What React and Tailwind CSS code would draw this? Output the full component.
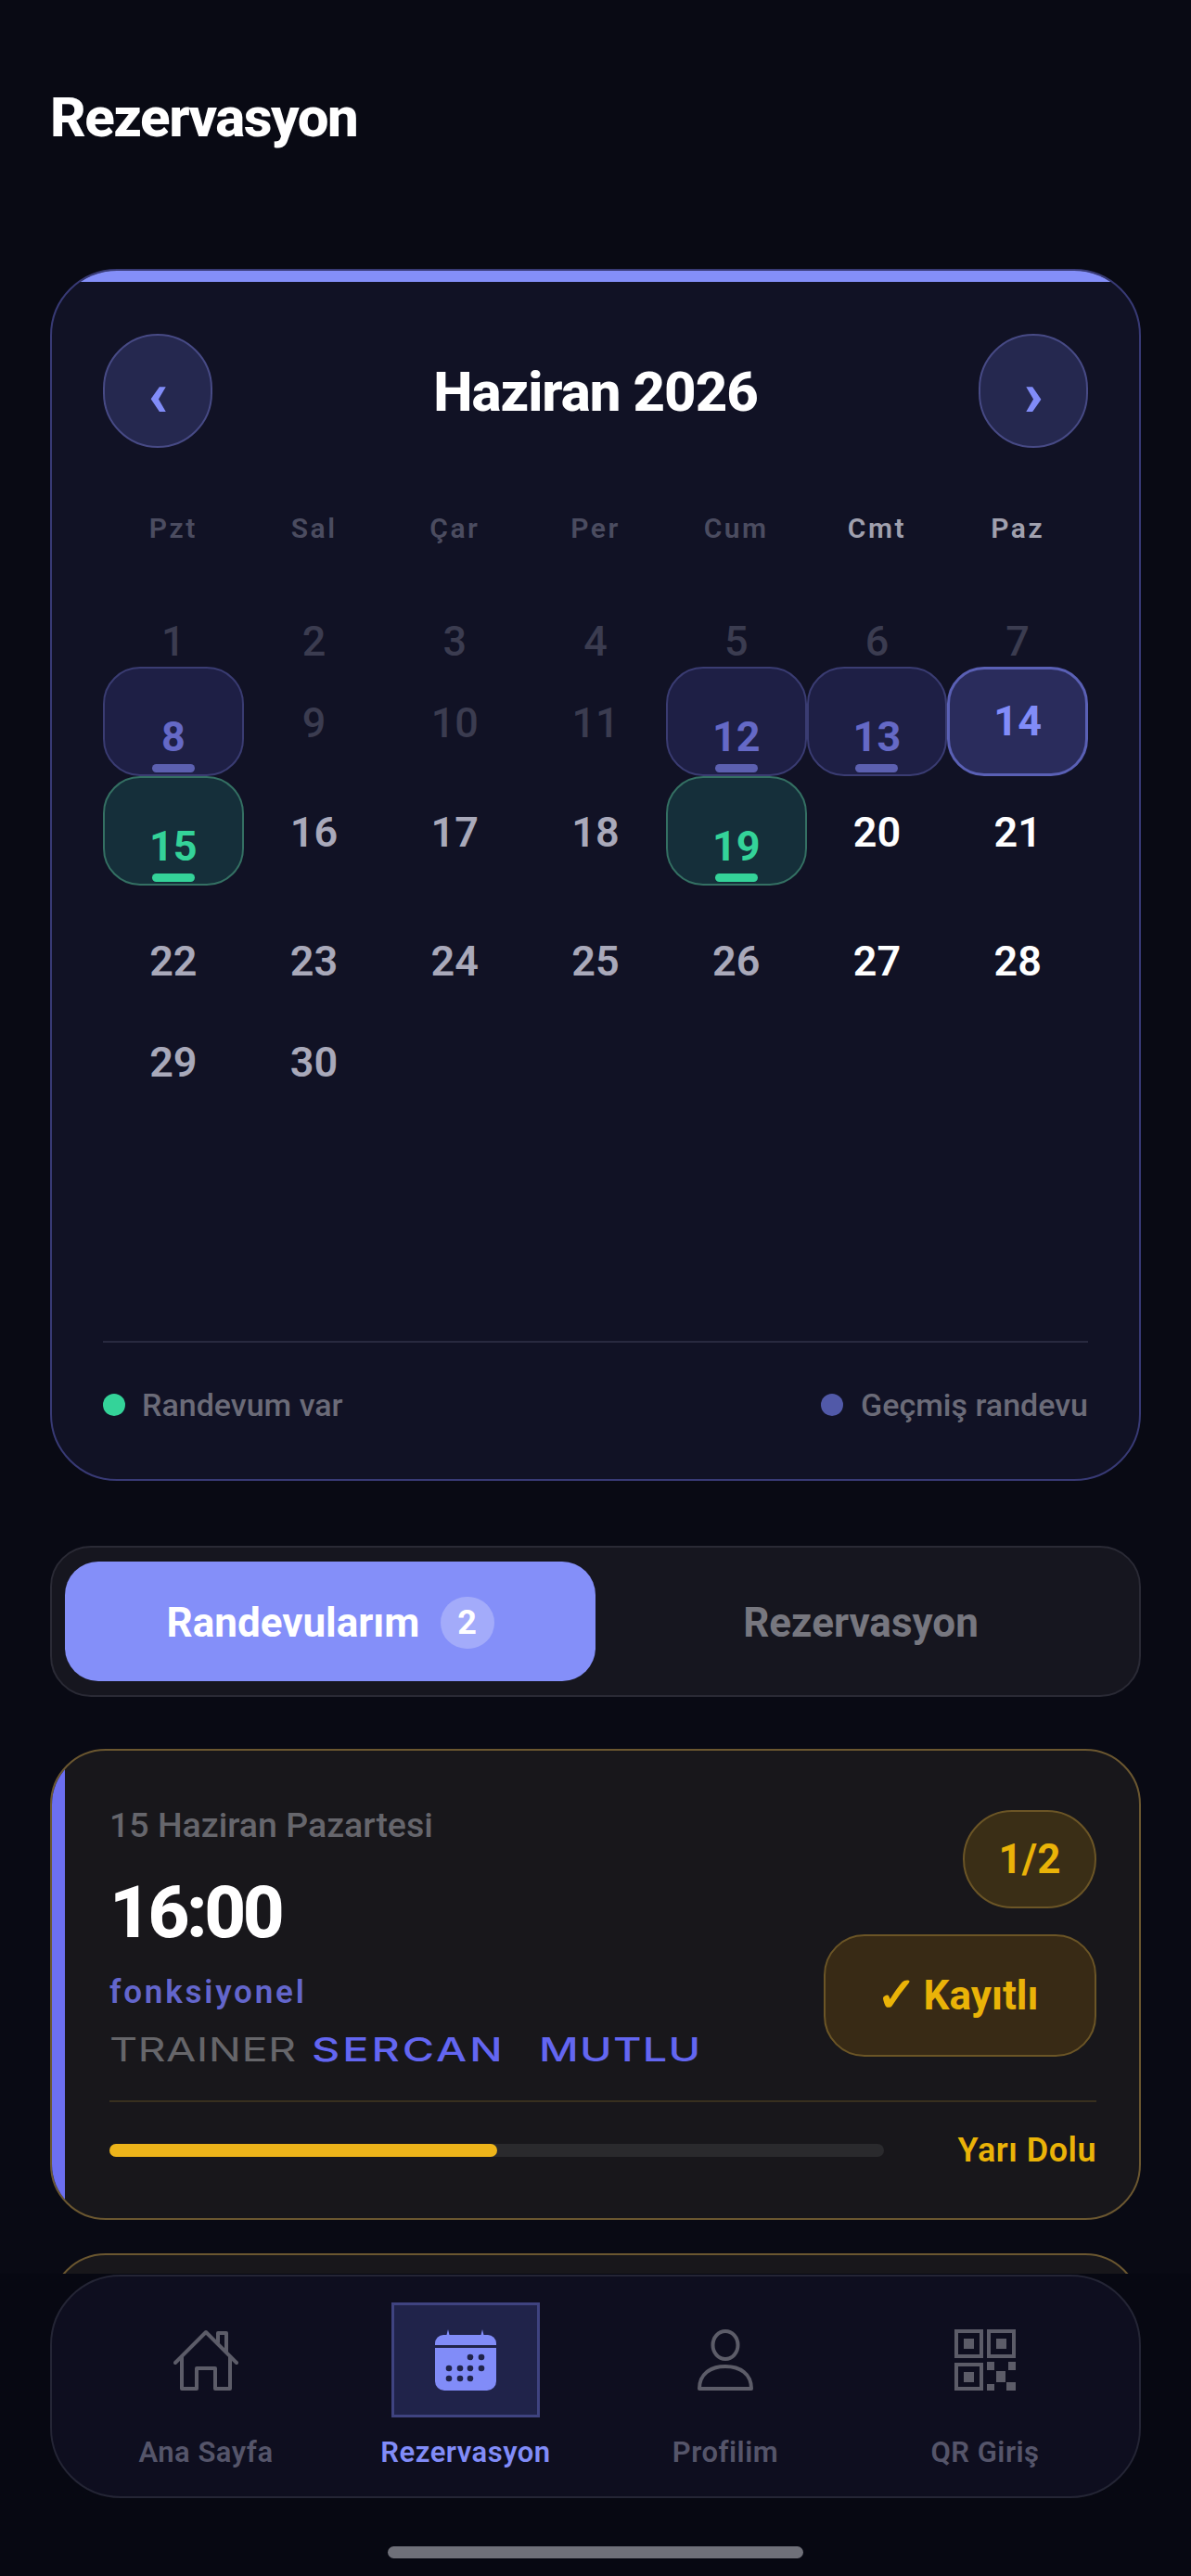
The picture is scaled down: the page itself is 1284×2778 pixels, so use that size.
import React from 'react';

const weekdays = [
    { label: 'Pzt' }, { label: 'Sal' }, { label: 'Çar' }, { label: 'Per' },
    { label: 'Cum' }, { label: 'Cmt', weekend: true }, { label: 'Paz', weekend: true },
];

// kinds: off (before today), past, today, booked, open, weekend
const days = [
    [1, 'off'], [2, 'off'], [3, 'off'], [4, 'off'], [5, 'off'], [6, 'off'], [7, 'off'],
    [8, 'past'], [9, 'off'], [10, 'off'], [11, 'off'], [12, 'past'], [13, 'past'], [14, 'today'],
    [15, 'booked'], [16, 'open'], [17, 'open'], [18, 'open'], [19, 'booked'], [20, 'weekend'], [21, 'weekend'],
    [22, 'open'], [23, 'open'], [24, 'open'], [25, 'open'], [26, 'open'], [27, 'weekend'], [28, 'weekend'],
    [29, 'open'], [30, 'open'],
];

function DayCell({ day, kind }) {
    if (kind === 'past' || kind === 'booked') {
        const past = kind === 'past';
        return (
            <div className={`flex flex-col items-center justify-end rounded-[40px] border-2 pb-[2px] ${past ? 'bg-[#1e1f45] border-[#3a3c72]' : 'bg-[#152f3a] border-[#347063]'}`}>
                <span className={`text-[45px] leading-[48px] font-bold ${past ? 'text-[#6569c6]' : 'text-[#34d399]'}`}>{day}</span>
                <span className={`mt-[5px] h-[9px] w-[46px] rounded-full ${past ? 'bg-[#5c60b0]' : 'bg-[#34d399]'}`} />
            </div>
        );
    }
    if (kind === 'today') {
        return (
            <div className="flex items-center justify-center rounded-[40px] border-[3px] border-[#5a60b5] bg-[#2a2c5c] text-[45px] font-bold text-[#818cf8]">
                {day}
            </div>
        );
    }
    const color = { off: 'text-[#3b3c50] font-medium', open: 'text-[#a9a9ba] font-semibold', weekend: 'text-white font-semibold' }[kind];
    return <div className={`flex items-center justify-center pt-[3px] text-[45px] ${color}`}>{day}</div>;
}

function RoundButton({ children }) {
    return (
        <div className="flex h-[123px] w-[118px] items-center justify-center rounded-full border-2 border-[#474a85] bg-[#25284f] pt-[6px] text-[68px] leading-none font-black text-[#818cf8]">
            {children}
        </div>
    );
}

function HomeIcon() {
    return (
        <svg width="70" height="66" viewBox="0 0 70 66" fill="none" stroke="#5c5c68" strokeWidth="4" strokeLinecap="round" strokeLinejoin="round">
            <path d="M2 36 L35 3 L68 36" />
            <path d="M9 30 V64 H25 V42 H45 V64 H61 V30" />
            <path d="M48 14 V4 H57 V24" />
        </svg>
    );
}

function CalendarIcon() {
    const dots = [[38, 30], [50, 30], [15, 42], [27, 42], [38, 42], [50, 42], [15, 53], [27, 53], [38, 53]];
    return (
        <svg width="66" height="66" viewBox="0 0 66 66">
            <path d="M12 8 L14 0 L16 8 Z M49 8 L51 0 L53 8 Z" fill="#818cf8" />
            <path d="M0 17 V15 a9 9 0 0 1 9 -9 H57 a9 9 0 0 1 9 9 V17 Z" fill="#818cf8" />
            <path d="M0 20 H66 V56 a10 10 0 0 1 -10 10 H10 a10 10 0 0 1 -10 -10 Z" fill="#818cf8" />
            {dots.map(([x, y]) => <circle key={`${x}-${y}`} cx={x} cy={y} r="3.3" fill="#20234a" />)}
        </svg>
    );
}

function PersonIcon() {
    return (
        <svg width="62" height="66" viewBox="0 0 62 66" fill="none" stroke="#5c5c68" strokeWidth="4" strokeLinejoin="round">
            <ellipse cx="31" cy="17" rx="13.5" ry="15" />
            <path d="M3 64 C3 48 15 40 31 40 C47 40 59 48 59 64 Z" />
        </svg>
    );
}

function QrIcon() {
    return (
        <svg width="66" height="66" viewBox="0 0 66 66" fill="#5c5c68">
            <g fill="none" stroke="#5c5c68" strokeWidth="4">
                <rect x="2" y="2" width="27" height="27" />
                <rect x="37" y="2" width="27" height="27" />
                <rect x="2" y="38" width="27" height="26" />
            </g>
            <rect x="10" y="10" width="11" height="11" />
            <rect x="45" y="10" width="11" height="11" />
            <rect x="10" y="46" width="11" height="11" />
            <rect x="35" y="35" width="8" height="9" />
            <rect x="58" y="35" width="8" height="9" />
            <rect x="45" y="45" width="10" height="12" />
            <rect x="35" y="59" width="8" height="7" />
            <rect x="56" y="57" width="10" height="9" />
        </svg>
    );
}

function NavItem({ icon, label, active }) {
    return (
        <div className="flex flex-col items-center">
            <div className={`flex h-[124px] w-[160px] items-center justify-center ${active ? 'border-[3px] border-[#3f4380] bg-[#20234a]' : ''}`}>
                {icon}
            </div>
            <div className={`mt-[18px] text-[31px] leading-[40px] font-semibold tracking-[0.5px] ${active ? 'text-[#818cf8]' : 'text-[#55556a]'}`}>
                {label}
            </div>
        </div>
    );
}

export default function App() {
    return (
        <div className="relative h-[2778px] w-[1284px] overflow-hidden bg-[#090a14] px-[54px] font-['Roboto',sans-serif]">
            <h1 className="pt-[92px] text-[60px] leading-[70px] font-extrabold tracking-[-1.5px] text-white">Rezervasyon</h1>

            {/* calendar */}
            <div className="relative mt-[128px] overflow-hidden rounded-[72px] border-2 border-[#383a75] bg-[#111225] px-[55px] pt-[68px] pb-[60px]">
                <div className="absolute inset-x-0 top-0 h-[12px] bg-[#848ff9]" />
                <div className="flex items-center justify-between">
                    <RoundButton>‹</RoundButton>
                    <div className="pt-[3px] text-[60px] leading-[70px] font-extrabold tracking-[-1px] text-white">Haziran 2026</div>
                    <RoundButton>›</RoundButton>
                </div>

                <div className="mt-[67px] grid grid-cols-7">
                    {weekdays.map((d) => (
                        <div key={d.label} className={`text-center text-[30px] leading-[40px] font-semibold tracking-[2.5px] ${d.weekend ? 'text-[#a0a0ae]' : 'text-[#4b4c60]'}`}>
                            {d.label}
                        </div>
                    ))}
                </div>

                <div className="mt-[71px] grid grid-cols-7 grid-rows-[58px_118px_118px_160px_58px]">
                    {days.map(([day, kind]) => <DayCell key={day} day={day} kind={kind} />)}
                </div>

                <div className="mt-[273px] h-[2px] bg-[#28293f]" />

                <div className="mt-[47px] flex items-center justify-between text-[34px] leading-[40px] font-medium text-[#6b6b78]">
                    <div className="flex items-center gap-[18px]">
                        <span className="h-[24px] w-[24px] rounded-full bg-[#34d399]" />
                        Randevum var
                    </div>
                    <div className="flex items-center gap-[19px]">
                        <span className="h-[24px] w-[24px] rounded-full bg-[#5159a8]" />
                        Geçmiş randevu
                    </div>
                </div>
            </div>

            {/* tabs */}
            <div className="mt-[70px] flex h-[163px] rounded-[44px] border-2 border-[#2a2a35] bg-[#16161f] px-[14px] py-[15px]">
                <div className="flex w-[572px] items-center justify-center gap-[22px] rounded-[36px] bg-[#848ff9] pt-[3px] text-[44px] font-bold text-white">
                    Randevularım
                    <span className="flex h-[56px] w-[58px] items-center justify-center rounded-full bg-white/25 text-[36px]">2</span>
                </div>
                <div className="flex flex-1 items-center justify-center pt-[3px] text-[44px] font-bold text-[#77777f]">Rezervasyon</div>
            </div>

            {/* appointment */}
            <div className="relative mt-[56px] h-[508px] overflow-hidden rounded-[60px] border-2 border-[#6b5730] bg-[#18171b] pt-[64px] pr-[46px] pl-[62px]">
                <div className="absolute inset-y-0 left-0 w-[14px] bg-[#6c6ff0]" />
                <div className="flex items-start justify-between">
                    <div className="-mt-[6px]">
                        <div className="text-[37.5px] leading-[44px] font-medium text-[#66666c]">15 Haziran Pazartesi</div>
                        <div className="mt-[28px] text-[78px] leading-[90px] font-extrabold tracking-[-3.5px] text-white">16:00</div>
                        <div className="mt-[19px] text-[35px] leading-[44px] font-semibold tracking-[2.8px] text-[#6366cc]">fonksiyonel</div>
                        <div className="mt-[19px] flex items-center font-['Inter',sans-serif] text-[36px] leading-[40px]">
                            <span className="w-[218px] origin-left scale-x-[1.3] tracking-[0.3px] text-[#66666a]">TRAINER</span>
                            <span className="w-[245px] origin-left scale-x-[1.3] font-medium tracking-[2.3px] text-[#6366f1]">SERCAN</span>
                            <span className="origin-left scale-x-[1.3] font-medium tracking-[1px] text-[#6366f1]">MUTLU</span>
                        </div>
                    </div>
                    <div className="flex flex-col items-end gap-[28px]">
                        <div className="flex h-[106px] w-[144px] items-center justify-center rounded-full border-2 border-[#6b5526] bg-[#3a2e16] text-[44px] font-bold text-[#eab308]">1/2</div>
                        <div className="flex h-[132px] w-[294px] items-center justify-center gap-[7px] rounded-[44px] border-2 border-[#6b5526] bg-[#382a15] pr-[6px] text-[44px] font-bold text-[#eab308]">
                            <span className="text-[52px] leading-none">✓</span>
                            <span>Kayıtlı</span>
                        </div>
                    </div>
                </div>
                <div className="mt-[35px] h-[2px] bg-[#38301f]" />
                <div className="mt-[32px] flex h-[40px] items-center justify-between">
                    <div className="h-[14px] w-[835px] rounded-full bg-[#2a2a2d]">
                        <div className="h-full w-1/2 rounded-full bg-[#edb41a]" />
                    </div>
                    <div className="text-[36px] font-semibold tracking-[0.5px] text-[#eab308]">Yarı Dolu</div>
                </div>
            </div>

            {/* next card, mostly under the nav */}
            <div className="mt-[36px] h-[120px] rounded-[60px] border-2 border-[#6b5730] bg-[#18171b]" />

            {/* bottom nav */}
            <div className="absolute inset-x-0 bottom-0 h-[326px] bg-[#070812] px-[54px]">
                <div className="mt-[1px] grid h-[241px] grid-cols-4 rounded-[76px] border-2 border-[#242535] bg-[#0e0e1f] px-[26px] pt-[28px]">
                    <NavItem icon={<HomeIcon />} label="Ana Sayfa" />
                    <NavItem icon={<CalendarIcon />} label="Rezervasyon" active />
                    <NavItem icon={<PersonIcon />} label="Profilim" />
                    <NavItem icon={<QrIcon />} label="QR Giriş" />
                </div>
                <div className="mx-auto mt-[52px] h-[13px] w-[448px] rounded-full bg-[#6f7079]" />
            </div>
        </div>
    );
}
